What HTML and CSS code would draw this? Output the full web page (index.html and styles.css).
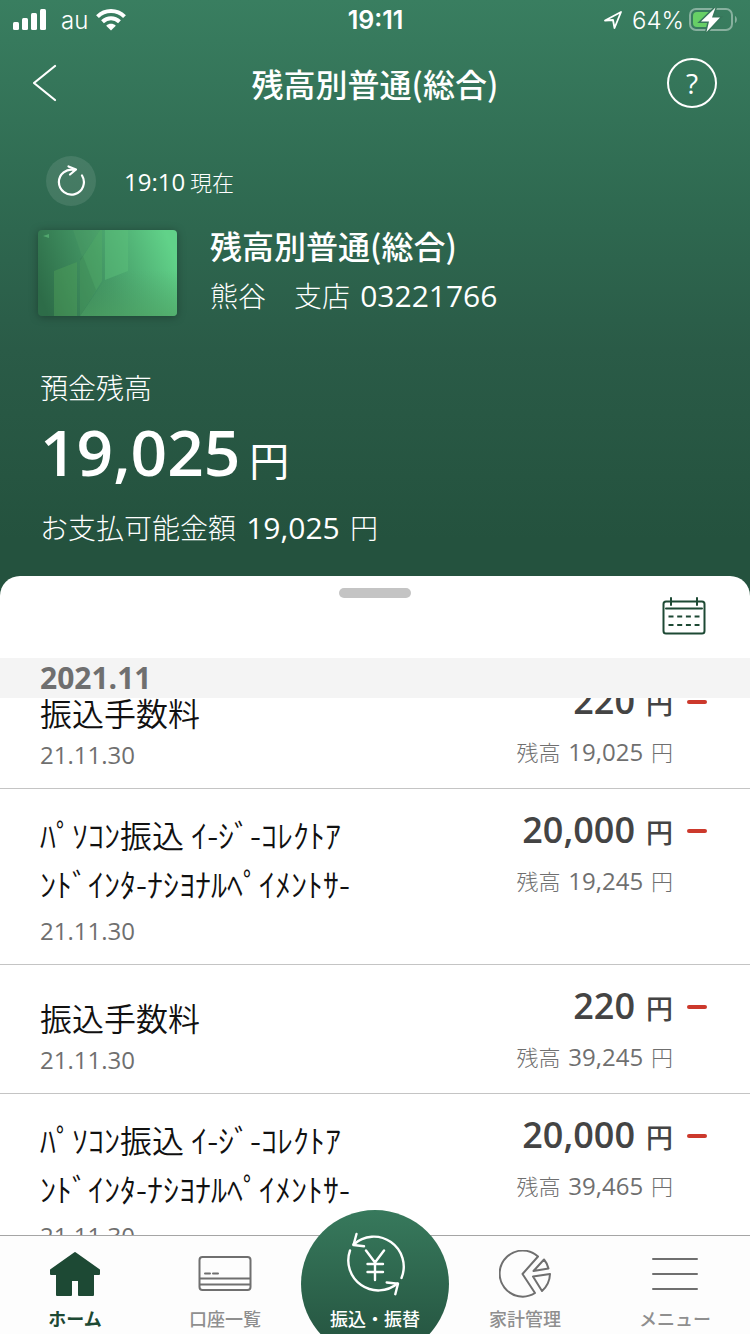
FILE: index.html
```html
<!DOCTYPE html>
<html lang="ja">
<head>
<meta charset="utf-8">
<meta name="viewport" content="width=device-width, initial-scale=1">
<title>残高別普通(総合)</title>
<link rel="stylesheet" href="styles.css">
</head>
<body>
<div class="app">
  <div class="status">
    <div class="status-side">
      <svg width="34" height="22" viewBox="0 0 34 22" fill="#fff" aria-hidden="true"><rect x="0" y="13" width="6" height="8" rx="1.5"/><rect x="9" y="9" width="6" height="12" rx="1.5"/><rect x="18" y="4" width="6" height="17" rx="1.5"/><rect x="27" y="0" width="6" height="21" rx="1.5"/></svg>
      <span class="carrier">au</span>
      <svg width="30" height="22" viewBox="0 0 30 22" fill="none" stroke="#fff" stroke-width="4" aria-hidden="true"><path d="M1.5 7.6C9 .2 21 .2 28.500 7.600"/><path d="M6.500 12.800C11.500 8 18.500 8 23.500 12.800"/><path d="M15 21.500l-4.800-4.800c2.800-2.500 6.800-2.500 9.600 0z" fill="#fff" stroke="none"/></svg>
    </div>
    <time class="clock">19:11</time>
    <div class="status-side status-right">
      <svg width="20" height="20" viewBox="0 0 20 20" fill="none" stroke="#fff" stroke-width="1.800" stroke-linejoin="round" aria-hidden="true"><path d="M2 10.500L18 2l-6.500 16-1.500-8z"/></svg>
      <span class="percent">64%</span>
      <svg width="49" height="26" viewBox="0 0 49 26" aria-hidden="true"><rect x="1" y="2" width="42" height="21" rx="6" fill="none" stroke="#fff" stroke-opacity=".4" stroke-width="2"/><path d="M46 9c2.500 1 2.500 6 0 7z" fill="#fff" fill-opacity=".4"/><path d="M8 5h12v15H8a4 4 0 0 1-4-4V9a4 4 0 0 1 4-4z" fill="#67cf66"/><path d="M26.500 .5L12 14.500h8L17.500 25 31 10.500h-8z" fill="#fff" stroke="#37775b" stroke-width="3" paint-order="stroke"/></svg>
    </div>
  </div>

  <header class="nav">
    <button class="icon-btn back" aria-label="戻る"><svg width="26" height="40" viewBox="0 0 26 40" fill="none" stroke="#fff" stroke-width="2.200" stroke-linecap="round"><path d="M22 3L1 20l21 17"/></svg></button>
    <h1 class="heading">残高別普通(総合)</h1>
    <button class="icon-btn help" aria-label="ヘルプ">?</button>
  </header>

  <section class="account">
    <div class="updated">
      <button class="icon-btn refresh" aria-label="更新"><svg width="30" height="32" viewBox="0 0 30 32" fill="none" stroke="#fff" stroke-width="2.200" stroke-linecap="round" stroke-linejoin="round"><path d="M26 10.500A12.500 12.500 0 1 1 18.500 5"/><path d="M12.500 1.500l7.500 3-6 5"/></svg></button>
      <p class="small"><span class="num-24">19:10</span> 現在</p>
    </div>
    <div class="identity">
      <svg class="card" width="140" height="88" viewBox="0 0 140 88" aria-hidden="true">
        <defs>
          <linearGradient id="cardBase" gradientUnits="userSpaceOnUse" x1="0" y1="60" x2="130" y2="10"><stop offset="0" stop-color="#2d6c48"/><stop offset=".5" stop-color="#459a67"/><stop offset="1" stop-color="#61d289"/></linearGradient>
          <linearGradient id="cardLow" x1="0" y1="0" x2="0" y2="1"><stop offset=".3" stop-color="#4c9f66" stop-opacity="0"/><stop offset="1" stop-color="#4fa463" stop-opacity=".6"/></linearGradient>
        </defs>
        <rect x="0" y="1" width="139" height="86" rx="4" fill="url(#cardBase)"/>
        <path d="M42 87l24-35 24-9 49-21v61a4 4 0 0 1-4 4z" fill="url(#cardLow)"/>
        <path d="M16 42l23-9v54H16z" fill="#52a45b" fill-opacity=".4"/>
        <path d="M42 32l20-31h2v51L42 87z" fill="#55ae66" fill-opacity=".4"/>
        <path d="M67 1h23v41L67 51z" fill="#5cc07a" fill-opacity=".5"/>
        <path d="M35 1h27L44 28z" fill="#55a368" fill-opacity=".25"/>
        <path d="M42 30l3-3 13 34-16 26z" fill="#2c6b48" fill-opacity=".18"/>
        <path d="M5 7l6-2v4z" fill="#51a66d"/>
      </svg>
      <div>
        <h2 class="heading">残高別普通(総合)</h2>
        <p class="medium">熊谷　支店 <span class="num-30">03221766</span></p>
      </div>
    </div>
    <p class="medium balance-label">預金残高</p>
    <p class="balance"><span class="balance-num">19,025</span> 円</p>
    <p class="medium">お支払可能金額 <span class="num-30">19,025</span> 円</p>
  </section>

  <main class="panel">
    <div class="panel-top">
      <span class="handle"></span>
      <button class="icon-btn calendar" aria-label="期間を選択"><svg width="44" height="38" viewBox="0 0 44 38" fill="none" stroke="#1d4934" stroke-width="2"><rect x="1.500" y="4.500" width="41" height="32" rx="2.500"/><path d="M4 11.500h36M9 1v7M35 1v7" stroke-linecap="round"/><path d="M6.500 19.500h31M6.500 28h31" stroke-dasharray="5 3.700"/></svg></button>
    </div>
    <div class="scroller">
      <h3 class="month">2021.11</h3>
      <ul class="list">
        <li class="row">
          <div><p class="payee">振込手数料</p><time class="date">21.11.30</time></div>
          <div class="amounts"><p class="amount"><span class="amount-num">220</span> 円<i class="minus"></i></p><p class="small rest">残高 <span class="num-24">19,025</span> 円</p></div>
        </li>
        <li class="row row-long">
          <div><p class="payee">ﾊﾟｿｺﾝ振込 ｲ-ｼﾞ-ｺﾚｸﾄｱ<br>ﾝﾄﾞｲﾝﾀ-ﾅｼﾖﾅﾙﾍﾟｲﾒﾝﾄｻ-</p><time class="date">21.11.30</time></div>
          <div class="amounts"><p class="amount"><span class="amount-num">20,000</span> 円<i class="minus"></i></p><p class="small rest">残高 <span class="num-24">19,245</span> 円</p></div>
        </li>
        <li class="row">
          <div><p class="payee">振込手数料</p><time class="date">21.11.30</time></div>
          <div class="amounts"><p class="amount"><span class="amount-num">220</span> 円<i class="minus"></i></p><p class="small rest">残高 <span class="num-24">39,245</span> 円</p></div>
        </li>
        <li class="row row-long">
          <div><p class="payee">ﾊﾟｿｺﾝ振込 ｲ-ｼﾞ-ｺﾚｸﾄｱ<br>ﾝﾄﾞｲﾝﾀ-ﾅｼﾖﾅﾙﾍﾟｲﾒﾝﾄｻ-</p><time class="date">21.11.30</time></div>
          <div class="amounts"><p class="amount"><span class="amount-num">20,000</span> 円<i class="minus"></i></p><p class="small rest">残高 <span class="num-24">39,465</span> 円</p></div>
        </li>
      </ul>
    </div>
  </main>

  <nav class="tabs">
    <a class="tab tab-active" href="#home"><svg width="52" height="48" viewBox="0 0 52 48" fill="#1d4934" stroke="#1d4934" stroke-width="2" stroke-linejoin="round"><path d="M26 3L2 20v4h6v21h14V30h8v15h14V24h6v-4z"/></svg>ホーム</a>
    <a class="tab" href="#accounts"><svg width="54" height="48" viewBox="0 0 54 48" fill="none" stroke="#6f6f6f" stroke-width="2"><rect x="1.500" y="7" width="51" height="33" rx="3"/><path d="M2 28.500h50M2 34.500h50"/><path d="M7 23.500h5M15 23.500h5" stroke-linecap="round"/></svg>口座一覧</a>
    <a class="tab tab-transfer" href="#transfer"><span class="disc"><svg width="64" height="64" viewBox="0 0 64 64" fill="none" stroke="#fff" stroke-width="2.400" stroke-linecap="round" stroke-linejoin="round"><path d="M10.500 12.500A30 30 0 0 1 58.500 46"/><path d="M7 18.500A30 30 0 0 0 54.500 51.500"/><path d="M13.500 2l-3 11 10.500 1.300M43.700 50.500l11.300 1.200-2.700 10.500"/><path d="M23 18.500l9 12 9-12M32 30.500V48M24.500 32h15.500M24.500 40h15.500"/></svg></span><span class="tab-text">振込・振替</span></a>
    <a class="tab" href="#budget"><svg width="52" height="48" viewBox="0 0 52 48" fill="none" stroke="#6f6f6f" stroke-width="2" stroke-linejoin="round"><path d="M39 6.500A23 23 0 1 0 36 43L23.500 24z"/><path d="M45 9.500L34.500 21 49.500 18.500a21 21 0 0 0-4.500-9zM34 26.500l17-2.500a24 24 0 0 1-8 17z"/></svg>家計管理</a>
    <a class="tab" href="#menu"><svg width="48" height="48" viewBox="0 0 48 48" fill="none" stroke="#6f6f6f" stroke-width="2" stroke-linecap="round"><path d="M2 9h44M2 24h44M2 39h44"/></svg>メニュー</a>
  </nav>
</div>
</body>
</html>
```
FILE: styles.css
```css
* { box-sizing: border-box; margin: 0; padding: 0; }
body {
  font-family: "Noto Sans CJK JP", sans-serif;
  color: #fff;
}
svg { display: block; flex: none; }
.app {
  height: 100vh;
  display: flex;
  flex-direction: column;
  background: linear-gradient(#397e60 0, #2f6a51 200px, #2a5b47 350px, #24523e 540px);
}

.status {
  display: grid;
  grid-template-columns: 1fr auto 1fr;
  align-items: center;
  height: 40px;
  padding: 0 12px 0 13px;
  font-family: Inter, sans-serif;
}
.status-side { display: flex; align-items: center; gap: 14px; }
.status-right { justify-content: flex-end; gap: 5px; }
.carrier { font-size: 24px; font-weight: 300; margin-right: -6px; }
.clock { font-size: 25px; line-height: 40px; font-weight: 600; }
.percent { font-size: 24px; font-weight: 300; margin-left: 4px; }

.icon-btn {
  display: flex;
  align-items: center;
  justify-content: center;
  border: 0;
  background: none;
  color: inherit;
  cursor: pointer;
}
.nav {
  display: grid;
  grid-template-columns: 1fr auto 1fr;
  align-items: center;
  height: 86px;
  padding: 0 33px;
}
.back { justify-self: start; }
.help {
  justify-self: end;
  width: 50px;
  height: 50px;
  border: 2px solid #fff;
  border-radius: 50%;
  font: 400 28px/1 "Open Sans", sans-serif;
}
.heading { font-size: 32px; line-height: 48px; font-weight: 500; }

.account { padding: 30px 38px 0; height: 450px; flex: none; }
.updated { display: flex; align-items: center; gap: 28px; padding-left: 8px; }
.refresh { width: 50px; height: 50px; border-radius: 50%; background: rgba(255, 255, 255, .1); }
.small { font-size: 22px; line-height: 32px; font-weight: 300; }
.medium { font-size: 28px; line-height: 40px; font-weight: 300; }
.num-24, .num-30 { font-family: "Open Sans", sans-serif; font-weight: 400; line-height: 1; }
.num-24 { font-size: 24px; }
.num-30 { font-size: 30px; margin: 0 4px; }
.identity { display: flex; gap: 32px; padding-top: 15px; }
.identity .medium { margin-top: 6px; }
.card { margin-top: 8px; filter: drop-shadow(0 1px 4px rgba(0, 0, 0, .3)); }
.balance-label { margin-top: 50px; }
.balance { padding: 8px 0 4px; font-size: 40px; line-height: 88px; font-weight: 400; }
.balance-num { font: 600 64px/1 "Open Sans", sans-serif; }
.account > .medium, .balance { padding-left: 2px; }

.panel {
  flex: 1;
  min-height: 0;
  display: flex;
  flex-direction: column;
  overflow: hidden;
  background: #fff;
  border-radius: 20px 20px 0 0;
}
.panel-top {
  display: grid;
  grid-template-columns: 1fr auto 1fr;
  align-items: start;
  height: 82px;
  padding: 12px 44px 0;
  flex: none;
}
.handle { grid-column: 2; width: 72px; height: 10px; border-radius: 5px; background: #c4c4c4; }
.calendar { justify-self: end; padding-top: 9px; }
.scroller { flex: 1; min-height: 0; overflow: hidden; }
.month {
  position: relative;
  z-index: 1;
  padding: 0 40px;
  background: #f4f4f4;
  color: #6f6f6f;
  font: 700 30px/40px "Open Sans", sans-serif;
}
.list { list-style: none; margin-top: -38px; }
.row {
  display: flex;
  align-items: flex-start;
  justify-content: space-between;
  padding: 33px 43px 19px 40px;
  border-bottom: 1px solid #c4c4c4;
}
.row-long { padding-top: 21px; }
.payee { color: #111; font-size: 32px; line-height: 39px; font-weight: 350; }
.row-long .payee { line-height: 49px; }
.date {
  display: block;
  margin-top: 9px;
  color: #6f6f6f;
  font: 400 24px/28px "Open Sans", sans-serif;
}
.amounts { text-align: right; margin-top: -17px; }
.row-long .amounts { margin-top: -5px; }
.amount {
  display: flex;
  align-items: baseline;
  justify-content: flex-end;
  gap: 11px;
  color: #444;
  font-size: 27px;
  line-height: 50px;
  font-weight: 500;
}
.amount-num { font: 600 36px/50px "Open Sans", sans-serif; }
.minus { align-self: center; width: 20px; height: 4px; margin-left: 3px; border-radius: 2px; background: #cc392c; }
.rest { color: #6f6f6f; padding: 7px 34px 0 0; }
.rest .num-24 { margin: 0 3px; }

.tabs {
  position: relative;
  display: grid;
  grid-template-columns: repeat(5, 1fr);
  flex: none;
  height: 99px;
  background: #fdfdfd;
  border-top: 1px solid #a5a5a5;
}
.tab {
  display: flex;
  flex-direction: column;
  align-items: center;
  gap: 6px;
  padding-top: 14px;
  color: #8f8f8f;
  font-size: 18px;
  line-height: 28px;
  font-weight: 500;
  text-decoration: none;
}
.tab-active { color: #1d4934; font-weight: 700; }
.tab-transfer { position: relative; color: #fff; padding-top: 0; }
.disc {
  position: absolute;
  bottom: -24px;
  width: 148px;
  height: 148px;
  padding-top: 22px;
  display: flex;
  justify-content: center;
  border-radius: 50%;
  background: linear-gradient(#37795c, #275843 124px);
  clip-path: inset(0 0 24px 0);
}
.tab-text { position: relative; margin-top: 68px; }
```
